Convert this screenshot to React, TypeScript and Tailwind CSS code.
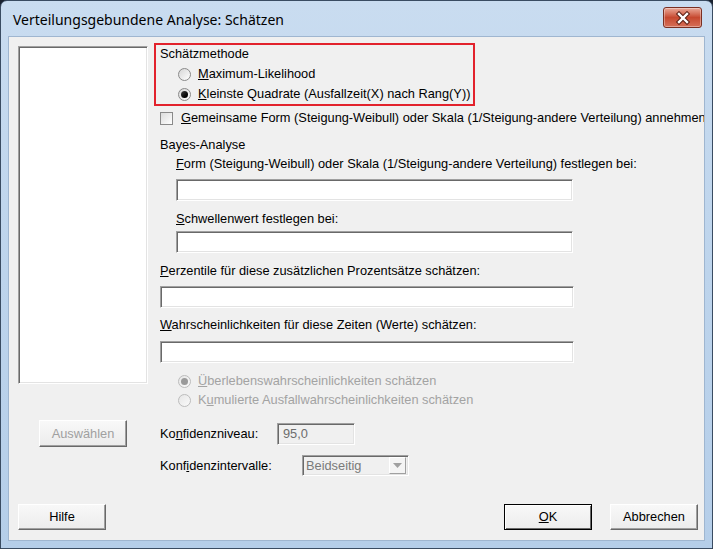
import React from 'react';

// Win7 style dialog: Verteilungsgebundene Analyse: Schätzen
const sunken =
  'border border-t-[#a0a0a0] border-l-[#a0a0a0] border-r-white border-b-white shadow-[inset_1px_1px_0_#696969,inset_-1px_-1px_0_#e3e3e3]';
const raised =
  'border border-t-white border-l-white border-r-[#696969] border-b-[#696969] shadow-[inset_-1px_-1px_0_#a0a0a0] bg-gradient-to-b from-[#f8f8f8] to-[#ececec]';

const Radio: React.FC<{ checked?: boolean; disabled?: boolean }> = ({ checked, disabled }) => (
  <span
    className={`relative inline-flex shrink-0 items-center justify-center w-[13px] h-[13px] rounded-full border ${
      disabled
        ? 'border-[#bcbcbc] bg-gradient-to-br from-[#e6e6e6] to-[#fafafa]'
        : 'border-[#8a8a8a] bg-gradient-to-br from-[#d6d6d6] to-white'
    }`}
  >
    {checked && (
      <span
        className={`w-[7px] h-[7px] rounded-full ${
          disabled ? 'bg-[#9a9a9a]' : 'bg-gradient-to-br from-[#444] to-[#000]'
        }`}
      />
    )}
  </span>
);

const Check: React.FC = () => (
  <span className="inline-block shrink-0 w-[13px] h-[13px] border border-[#8a8a8a] bg-gradient-to-br from-[#dcdcdc] to-white" />
);

const Button: React.FC<{ label: React.ReactNode; disabled?: boolean; def?: boolean; className?: string }> = ({
  label,
  disabled,
  def,
  className = '',
}) => (
  <div
    className={`flex shrink-0 items-center justify-center w-[88px] h-[26px] ${
      def
        ? 'border border-black shadow-[inset_1px_1px_0_#fff,inset_-1px_-1px_0_#696969] bg-gradient-to-b from-[#f8f8f8] to-[#ececec]'
        : raised
    } ${disabled ? 'text-[#a0a0a0]' : 'text-black'} ${className}`}
  >
    {label}
  </div>
);

export default function App() {
  return (
    <div className="w-[713px] h-[549px] bg-[#1a2230] font-['Liberation_Sans',Arial,sans-serif] text-[12.8px] leading-[16px] text-black select-none">
      <div className="flex flex-col h-full rounded-t-[7px] border border-[#3a4c62] bg-gradient-to-b from-[#c9dcf0] via-[#bdd4ec] to-[#b5cee9]">
        {/* Title bar */}
        <div className="flex items-center justify-between h-[35px] pl-[12px] pr-[10px]">
          <span className="font-['Noto_Sans',sans-serif] text-[14px] text-black pt-[2px]">
            Verteilungsgebundene Analyse: Schätzen
          </span>
          <div className="flex items-center justify-center w-[39px] h-[21px] mt-[-2px] rounded-[3px] border border-[#7a2f22] bg-gradient-to-b from-[#e9a898] via-[#c6482f] to-[#d56f58] shadow-[inset_0_0_0_1px_rgba(255,255,255,0.35)]">
            <svg width="16" height="14" viewBox="0 0 16 14">
              <path d="M4 3 L12 11 M12 3 L4 11" stroke="#5a1e14" strokeWidth="4.4" strokeLinecap="square" />
              <path d="M4 3 L12 11 M12 3 L4 11" stroke="#ffffff" strokeWidth="2.4" strokeLinecap="square" />
            </svg>
          </div>
        </div>

        {/* Client area */}
        <div className="flex flex-col flex-1 mx-[7px] mb-[7px] border border-[#9fb6d0] bg-[#f0f0f0] overflow-hidden">
          <div className="flex flex-1 pl-[9px]">
            {/* Left column */}
            <div className="flex flex-col shrink-0 w-[130px]">
              <div className={`mt-[9px] h-[338px] bg-white ${sunken}`} />
              <Button label="Auswählen" disabled className="mt-[36px] ml-[21px] h-[27px]" />
            </div>

            {/* Right column */}
            <div className="flex flex-col shrink-0 ml-[6px] whitespace-nowrap">
              <div className="mt-[6px] w-[321px] h-[63px] border-2 border-[#e2222c] pl-[4px] pt-[1px]">
                <div className="h-[16px]">Schätzmethode</div>
                <div className="flex items-center h-[16px] mt-[4px] pl-[18px] gap-[7px]">
                  <Radio />
                  <span>
                    <u>M</u>aximum-Likelihood
                  </span>
                </div>
                <div className="flex items-center h-[16px] mt-[4px] pl-[18px] gap-[7px]">
                  <Radio checked />
                  <span>
                    <u>K</u>leinste Quadrate (Ausfallzeit(X) nach Rang(Y))
                  </span>
                </div>
              </div>

              <div className="flex items-center h-[16px] mt-[4px] pl-[6px] gap-[8px]">
                <Check />
                <span>
                  <u>G</u>emeinsame Form (Steigung-Weibull) oder Skala (1/Steigung-andere Verteilung) annehmen
                </span>
              </div>

              <div className="h-[16px] mt-[11px] pl-[6px]">Bayes-Analyse</div>
              <div className="h-[16px] mt-[3px] pl-[22px]">
                <u>F</u>orm (Steigung-Weibull) oder Skala (1/Steigung-andere Verteilung) festlegen bei:
              </div>
              <div className={`mt-[7px] ml-[22px] w-[397px] h-[22px] bg-white ${sunken}`} />
              <div className="h-[16px] mt-[10px] pl-[22px]">
                <u>S</u>chwellenwert festlegen bei:
              </div>
              <div className={`mt-[4px] ml-[22px] w-[397px] h-[22px] bg-white ${sunken}`} />

              <div className="h-[16px] mt-[10px] pl-[6px]">
                <u>P</u>erzentile für diese zusätzlichen Prozentsätze schätzen:
              </div>
              <div className={`mt-[7px] ml-[6px] w-[414px] h-[22px] bg-white ${sunken}`} />
              <div className="h-[16px] mt-[9px] pl-[6px]">
                <u>W</u>ahrscheinlichkeiten für diese Zeiten (Werte) schätzen:
              </div>
              <div className={`mt-[8px] ml-[6px] w-[414px] h-[22px] bg-white ${sunken}`} />

              <div className="flex items-center h-[16px] mt-[10px] pl-[24px] gap-[7px] text-[#a3a3a3]">
                <Radio checked disabled />
                <span>
                  <u>Ü</u>berlebenswahrscheinlichkeiten schätzen
                </span>
              </div>
              <div className="flex items-center h-[16px] mt-[3px] pl-[24px] gap-[7px] text-[#a3a3a3]">
                <Radio disabled />
                <span>
                  K<u>u</u>mulierte Ausfallwahrscheinlichkeiten schätzen
                </span>
              </div>

              <div className="flex items-center mt-[15px] pl-[6px]">
                <span className="w-[117px]">
                  Ko<u>n</u>fidenzniveau:
                </span>
                <div className={`flex items-center w-[78px] h-[22px] pl-[5px] bg-[#f0f0f0] text-[#6d6d6d] ${sunken}`}>
                  95,0
                </div>
              </div>
              <div className="flex items-center mt-[10px] pl-[6px]">
                <span className="w-[142px]">
                  Konf<u>i</u>denzintervalle:
                </span>
                <div className={`flex items-center justify-between w-[107px] h-[21px] pl-[3px] pr-[2px] bg-[#f0f0f0] text-[#7a7a7a] ${sunken}`}>
                  <span>Beidseitig</span>
                  <div className="flex items-center justify-center w-[17px] h-[17px] border border-t-white border-l-white border-r-[#a0a0a0] border-b-[#a0a0a0] bg-[#f4f4f4]">
                    <svg width="9" height="5" viewBox="0 0 9 5">
                      <path d="M0 0 H9 L4.5 5 Z" fill="#a0a0a0" />
                    </svg>
                  </div>
                </div>
              </div>
            </div>
          </div>

          {/* Bottom buttons */}
          <div className="flex items-center h-[26px] mb-[10px] pl-[9px] pr-[6px]">
            <Button label="Hilfe" />
            <div className="flex-1" />
            <Button
              label={
                <span>
                  <u>O</u>K
                </span>
              }
              def
            />
            <Button label="Abbrechen" className="ml-[18px]" />
          </div>
        </div>
      </div>
    </div>
  );
}
